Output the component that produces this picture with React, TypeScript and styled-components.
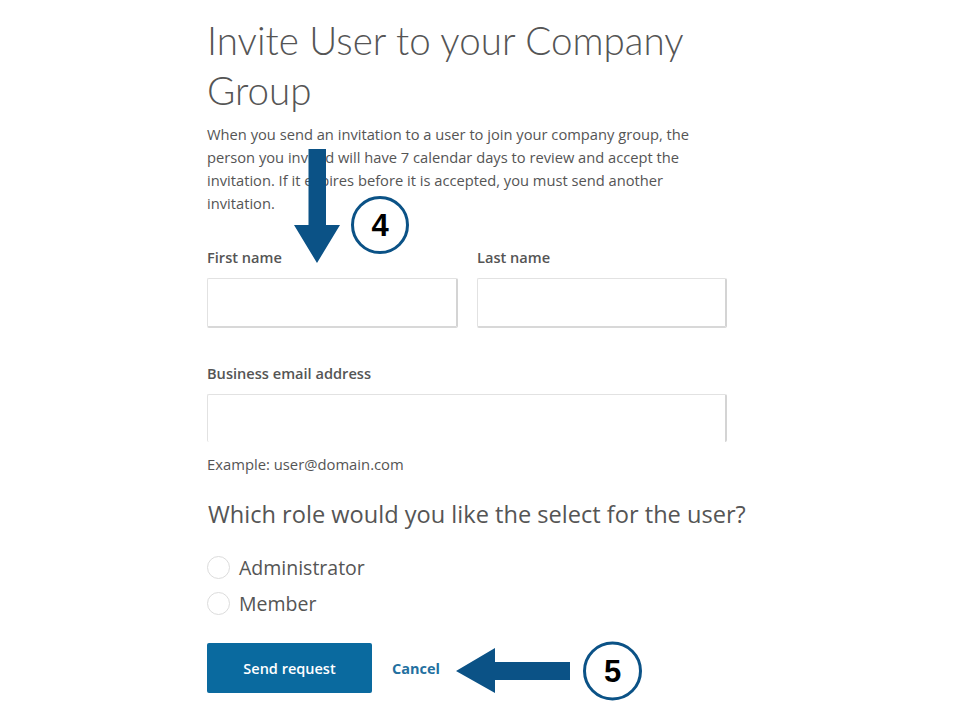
import React from "react";
import styled, { createGlobalStyle } from "styled-components";

const Global = createGlobalStyle`
  html, body { margin: 0; padding: 0; background: #fff; }
  body { font-family: "Open Sans", "Noto Sans", sans-serif; color: #555; }
  * { box-sizing: border-box; }
`;

const Page = styled.div`
  position: relative;
  width: 964px;
  height: 720px;
  overflow: hidden;
  background: #fff;
`;

const Form = styled.div`
  display: flex;
  flex-direction: column;
  width: 545px;
  margin-left: 207px;
  padding-top: 15px;
`;

const Title = styled.h1`
  margin: 0;
  font-family: Lato, "Open Sans", sans-serif;
  font-weight: 300;
  font-size: 38.6px;
  line-height: 50px;
  color: #555;
`;

const Intro = styled.p`
  margin: 8px 0 0;
  width: 500px;
  font-size: 14.7px;
  line-height: 23px;
  color: #555;
`;

const NameRow = styled.div`
  display: grid;
  grid-template-columns: 251px 250px;
  column-gap: 19px;
  margin-top: 32px;
`;

const Field = styled.div`
  display: flex;
  flex-direction: column;
`;

const Label = styled.label`
  font-size: 14.6px;
  font-weight: 600;
  line-height: 20px;
  color: #555;
  margin-bottom: 11px;
`;

const Input = styled.div<{ $open?: boolean }>`
  height: ${(p) => (p.$open ? 48 : 50)}px;
  border: 1px solid #e2e2e2;
  border-right: 2px solid #d4d4d4;
  border-bottom: ${(p) => (p.$open ? "none" : "2px solid #d8d8d8")};
  border-radius: 2px;
  background: #fff;
`;

const EmailField = styled(Field)`
  width: 520px;
  margin-top: 35px;
`;

const Hint = styled.div`
  margin-top: 12px;
  font-size: 14.8px;
  line-height: 20px;
  color: #555;
`;

const Question = styled.h2`
  margin: 24px 0 0 1px;
  font-weight: 400;
  font-size: 23.6px;
  line-height: 32px;
  color: #555;
`;

const Radios = styled.div`
  display: flex;
  flex-direction: column;
  gap: 13px;
  margin-top: 26px;
`;

const RadioRow = styled.div`
  display: flex;
  align-items: center;
  gap: 9px;
  font-size: 19.5px;
  line-height: 23px;
  color: #555;
`;

const RadioDot = styled.span`
  width: 23px;
  height: 23px;
  border-radius: 50%;
  border: 1.5px solid #dcdcdc;
  background: #fff;
`;

const Actions = styled.div`
  display: flex;
  align-items: center;
  gap: 20px;
  margin-top: 28px;
`;

const PrimaryButton = styled.button`
  width: 165px;
  height: 50px;
  border: none;
  border-radius: 2px;
  background: #0a6a9f;
  color: #fff;
  font-family: inherit;
  font-size: 14.5px;
  font-weight: 600;
  cursor: pointer;
`;

const CancelLink = styled.a`
  color: #2370a0;
  font-size: 14.5px;
  font-weight: 700;
  text-decoration: none;
`;

const Annotation = styled.svg`
  position: absolute;
  overflow: visible;
`;

const StepNumber = styled.text`
  font-family: "Liberation Sans", Arial, sans-serif;
  font-weight: 700;
  font-size: 31px;
  fill: #000;
`;

const BLUE = "#0b5286";

export default function App() {
  return (
    <Page>
      <Global />
      <Form>
        <Title>
          Invite User to your Company
          <br />
          Group
        </Title>
        <Intro>
          When you send an invitation to a user to join your company group, the
          person you invited will have 7 calendar days to review and accept the
          invitation. If it expires before it is accepted, you must send another
          invitation.
        </Intro>
        <NameRow>
          <Field>
            <Label>First name</Label>
            <Input />
          </Field>
          <Field>
            <Label>Last name</Label>
            <Input />
          </Field>
        </NameRow>
        <EmailField>
          <Label>Business email address</Label>
          <Input $open />
        </EmailField>
        <Hint>Example: user@domain.com</Hint>
        <Question>Which role would you like the select for the user?</Question>
        <Radios>
          <RadioRow>
            <RadioDot />
            Administrator
          </RadioRow>
          <RadioRow>
            <RadioDot />
            Member
          </RadioRow>
        </Radios>
        <Actions>
          <PrimaryButton>Send request</PrimaryButton>
          <CancelLink href="#">Cancel</CancelLink>
        </Actions>
      </Form>

      <Annotation width="964" height="720" style={{ left: 0, top: 0 }}>
        <polygon
          points="308.5,149 326,149 326,225 340,225 317,263 294,225 308.5,225"
          fill={BLUE}
        />
        <circle cx="380" cy="225" r="27.5" fill="#fff" stroke={BLUE} strokeWidth="3" />
        <StepNumber x="380" y="236" textAnchor="middle">4</StepNumber>

        <polygon
          points="456,671 495,648 495,662 570,662 570,680 495,680 495,693"
          fill={BLUE}
        />
        <circle cx="612.5" cy="671" r="28" fill="#fff" stroke={BLUE} strokeWidth="3" />
        <StepNumber x="612.5" y="682" textAnchor="middle">5</StepNumber>
      </Annotation>
    </Page>
  );
}
